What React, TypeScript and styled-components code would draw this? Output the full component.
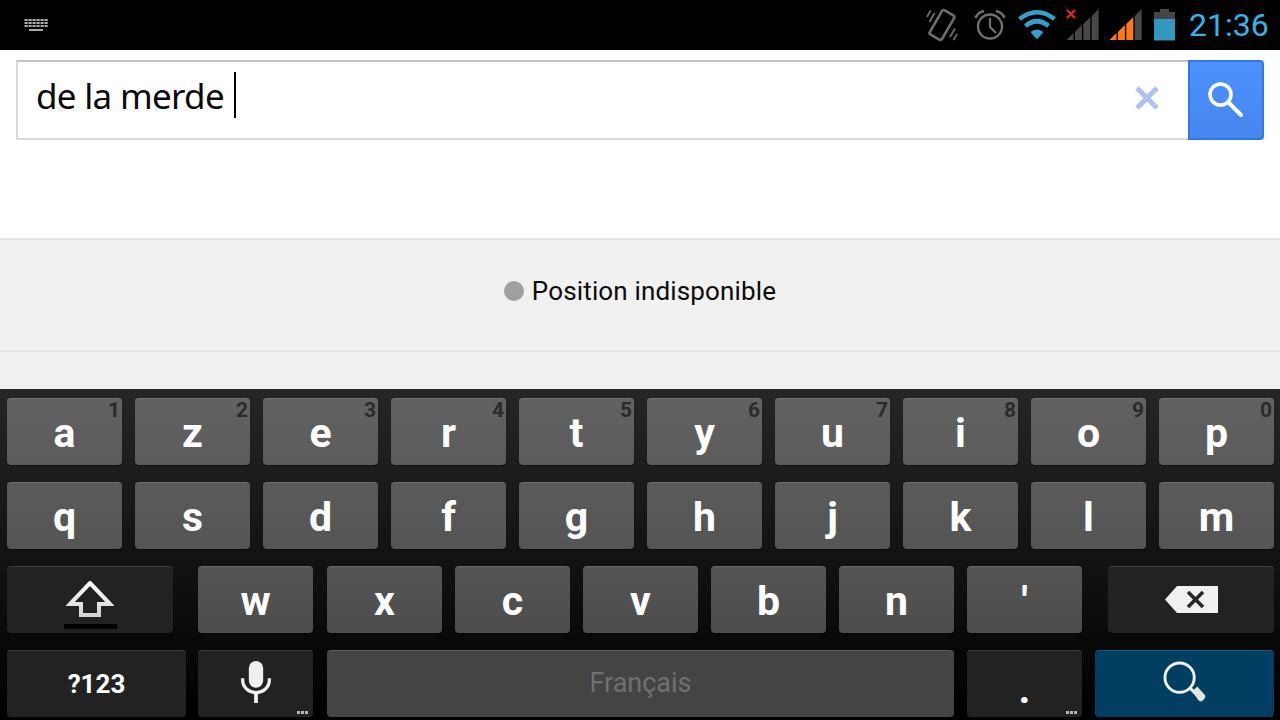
import React from 'react';
import styled, { createGlobalStyle } from 'styled-components';

const GlobalStyle = createGlobalStyle`
  html, body {
    margin: 0;
    padding: 0;
    width: 1280px;
    height: 720px;
    overflow: hidden;
    background: #fff;
    font-family: Roboto, "Liberation Sans", sans-serif;
  }
`;

const Screen = styled.div`
  width: 1280px;
  height: 720px;
  display: flex;
  flex-direction: column;
`;

const StatusBar = styled.header`
  height: 50px;
  flex: none;
  background: #000;
  display: flex;
  align-items: center;
  padding: 0 12px 0 24px;
  box-sizing: border-box;
`;

const StatusIcons = styled.div`
  margin-left: auto;
  display: flex;
  align-items: center;
`;

const StatusIcon = styled.svg<{ $gap: number }>`
  display: block;
  flex: none;
  margin-left: ${(p) => p.$gap}px;
`;

const KeyboardGlyph = styled.svg`
  display: block;
  margin-top: 2px;
`;

const Clock = styled.span`
  margin-left: 14px;
  width: 79px;
  font-size: 32px;
  font-weight: 400;
  line-height: 50px;
  color: #33b5e5;
  white-space: nowrap;
`;

const SearchArea = styled.section`
  height: 188px;
  flex: none;
  box-sizing: border-box;
  padding: 10px 16px 0;
  background: #fff;
`;

const SearchForm = styled.div`
  display: flex;
  height: 80px;
  width: 1248px;
`;

const SearchField = styled.div`
  flex: 1;
  display: flex;
  align-items: center;
  box-sizing: border-box;
  padding: 0 28px 0 18px;
  border: 2px solid #d9d9d9;
  border-top-color: #c4c4c4;
  border-right: none;
`;

const QueryText = styled.span`
  margin-top: -10px;
  font-family: "Noto Sans", "Open Sans", sans-serif;
  font-size: 35px;
  letter-spacing: -0.7px;
  color: #0a0a0a;
  white-space: nowrap;
`;

const Caret = styled.span`
  width: 2px;
  height: 46px;
  margin: -10px 0 0 10px;
  background: #000;
`;

const ClearIcon = styled.svg`
  margin: -4px 0 0 auto;
  display: block;
`;

const SearchButton = styled.div`
  width: 76px;
  flex: none;
  box-sizing: border-box;
  display: flex;
  align-items: center;
  justify-content: center;
  background: linear-gradient(#4d90fe, #4787ed);
  border: 2px solid #3079ed;
  border-radius: 0 4px 4px 0;
`;

const LocationBar = styled.section`
  height: 114px;
  flex: none;
  box-sizing: border-box;
  background: #f1f1f1;
  border-top: 2px solid #e5e5e5;
  border-bottom: 2px solid #e5e5e5;
  display: flex;
  align-items: center;
  justify-content: center;
  padding-bottom: 8px;
  gap: 8px;
`;

const Dot = styled.span`
  width: 20px;
  height: 20px;
  border-radius: 50%;
  background: #a0a0a0;
`;

const LocationText = styled.span`
  font-size: 26px;
  letter-spacing: 0.15px;
  color: #0c0c0c;
`;

const FooterGap = styled.div`
  flex: none;
  height: 37px;
  background: #f1f1f1;
`;

const Keyboard = styled.section`
  flex: 1;
  display: flex;
  flex-direction: column;
  gap: 17px;
  box-sizing: border-box;
  padding: 9px 6px 0 7px;
  background: linear-gradient(#262626, #000);
`;

const KeyRow = styled.div`
  display: flex;
  gap: 13px;
  height: 67px;
`;

type KeyKind = 'letter' | 'dark' | 'action' | 'space';

const keyBackgrounds: Record<KeyKind, string> = {
  letter: 'rgba(255, 255, 255, 0.28)',
  dark: '#222',
  action: '#003f62',
  space: '#444',
};

const Key = styled.div<{ $width?: number; $kind?: KeyKind; $before?: number }>`
  position: relative;
  flex: none;
  width: ${(p) => p.$width ?? 115}px;
  margin-left: ${(p) => p.$before ?? 0}px;
  box-sizing: border-box;
  padding-top: 3px;
  border-radius: 4px;
  display: flex;
  align-items: center;
  justify-content: center;
  color: #fff;
  background: ${(p) => keyBackgrounds[p.$kind ?? 'letter']};
  box-shadow: inset 0 1px 0 rgba(255, 255, 255, 0.12), 0 1px 1px rgba(0, 0, 0, 0.5);
  font-size: 41px;
  font-weight: 700;
  line-height: 1;
`;

const Hint = styled.span`
  position: absolute;
  top: 2px;
  right: 2px;
  font-size: 21px;
  font-weight: 700;
  color: #2b2b2b;
`;

const MoreDots = styled.span`
  position: absolute;
  right: 5px;
  bottom: 3px;
  width: 11px;
  height: 3px;
  background: repeating-linear-gradient(90deg, #b5b5b5 0 3px, transparent 3px 4px);
`;

const ModeLabel = styled.span`
  margin-top: -2px;
  font-size: 26px;
  font-weight: 700;
`;

const SpaceLabel = styled.span`
  margin-top: -4px;
  font-size: 27px;
  font-weight: 400;
  color: #707070;
`;

const PeriodLabel = styled.span`
  margin-top: 8px;
`;

const QuoteLabel = styled.span`
  margin-top: 0;
`;

const ShiftBar = styled.span`
  position: absolute;
  left: 57px;
  bottom: 4px;
  width: 53px;
  height: 5px;
  background: #000;
`;

const KeyGlyph = styled.svg<{ $lift: number }>`
  display: block;
  margin-top: -${(p) => p.$lift}px;
`;

function KeyboardIcon() {
  const rows = [0, 1, 2];
  return (
    <KeyboardGlyph width="25" height="14" viewBox="0 0 25 14" fill="#a8a8a8">
      {rows.map((r) =>
        [0, 1, 2, 3, 4, 5].map((c) => (
          <rect key={`${r}-${c}`} x={c * 4 + 0.5} y={r * 3} width="3.2" height="2" />
        ))
      )}
      <rect x="5" y="10" width="14" height="2" />
    </KeyboardGlyph>
  );
}

function VibrateIcon() {
  return (
    <StatusIcon $gap={0} width="32" height="36" viewBox="0 0 32 36" fill="none" stroke="#6e6e6e">
      <rect x="9" y="4" width="14" height="28" rx="2" strokeWidth="2.6" transform="rotate(30 16 18)" />
      <path d="M3.5 15 L8.5 6 M1 10 L4.5 3.5 M24 30 L29 21.5 M27.5 33 L31 27" strokeWidth="1.8" />
    </StatusIcon>
  );
}

function AlarmIcon() {
  return (
    <StatusIcon $gap={16} width="32" height="32" viewBox="0 0 32 32" fill="none" stroke="#707070">
      <circle cx="16" cy="17.5" r="12" strokeWidth="2.4" />
      <path d="M16 9 V18 L22 24" strokeWidth="2.2" />
      <path d="M1.5 9 Q4 3 10 2 M30.5 9 Q28 3 22 2" strokeWidth="2.4" />
    </StatusIcon>
  );
}

function WifiIcon() {
  return (
    <StatusIcon $gap={11} width="40" height="32" viewBox="0 0 40 32" fill="none" stroke="#33a0cc">
      <path d="M2.5 10 Q20 -3.5 37.5 10" strokeWidth="4.6" />
      <path d="M8.5 17 Q20 7.5 31.5 17" strokeWidth="4.6" />
      <path d="M13.5 23 Q20 18 26.5 23 L20 30.5 Z" fill="#33a0cc" stroke="none" />
    </StatusIcon>
  );
}

function SignalIcon({ gap, bars, cross }: { gap: number; bars: number; cross?: boolean }) {
  const heights = [7, 15, 23, 31];
  return (
    <StatusIcon $gap={gap} width="33" height="32" viewBox="0 0 33 32">
      {heights.map((h, i) => {
        const x = i * 8.4 + 0.5;
        return (
          <polygon
            key={h}
            points={`${x},31 ${x + 7},31 ${x + 7},${31 - h} ${x},${31 - h + 7}`}
            fill={i < bars ? '#ff7a14' : '#474747'}
          />
        );
      })}
      {cross && <path d="M1 1 L9 9 M9 1 L1 9" stroke="#e0232e" strokeWidth="2.4" />}
    </StatusIcon>
  );
}

function BatteryIcon() {
  return (
    <StatusIcon $gap={12} width="21" height="32" viewBox="0 0 21 32">
      <rect x="6" y="0" width="9" height="3" fill="#454545" />
      <rect x="0" y="3" width="21" height="7" fill="#454545" />
      <rect x="0" y="10" width="21" height="21.5" fill="#3396bd" />
    </StatusIcon>
  );
}

function ClearGlyph() {
  return (
    <ClearIcon width="26" height="26" viewBox="0 0 26 26">
      <path d="M3 3 L23 23 M23 3 L3 23" stroke="#aec2ef" strokeWidth="5" />
    </ClearIcon>
  );
}

function SearchGlyph() {
  return (
    <svg width="36" height="36" viewBox="0 0 36 36" fill="none" stroke="#fff">
      <circle cx="12.5" cy="12.5" r="10.5" strokeWidth="3.6" />
      <path d="M20.5 20.5 L33 33" strokeWidth="4" strokeLinecap="round" />
    </svg>
  );
}

function ShiftGlyph() {
  return (
    <KeyGlyph $lift={4} width="48" height="36" viewBox="0 0 48 36">
      <defs>
        <linearGradient id="shiftFill" x1="0" y1="0" x2="0" y2="1">
          <stop offset="0" stopColor="#ffffff" />
          <stop offset="1" stopColor="#d4d4d4" />
        </linearGradient>
      </defs>
      <path d="M24 3 L44 24 H33 V35 H15 V24 H4 Z" fill="none" stroke="url(#shiftFill)" strokeWidth="4" transform="translate(0 -1)" />
    </KeyGlyph>
  );
}

function MicGlyph() {
  return (
    <KeyGlyph $lift={7} width="32" height="42" viewBox="0 0 32 44" fill="none">
      <rect x="8.5" y="0" width="15" height="28" rx="7.5" fill="#f0f0f0" />
      <path d="M2 18 V20 C2 28 9 33 16 33 C23 33 30 28 30 20 V18" stroke="#f0f0f0" strokeWidth="3.4" />
      <path d="M16 33 V44" stroke="#f0f0f0" strokeWidth="4" />
    </KeyGlyph>
  );
}

function BackspaceGlyph() {
  return (
    <KeyGlyph $lift={3} width="53" height="27" viewBox="0 0 53 27">
      <path d="M12 0 H53 V27 H12 L0 13.5 Z" fill="#f0f0f0" />
      <path d="M23 6 L38 21 M38 6 L23 21" stroke="#262626" strokeWidth="3.6" />
    </KeyGlyph>
  );
}

function GoGlyph() {
  return (
    <KeyGlyph $lift={5} width="45" height="45" viewBox="0 0 46 46" fill="none">
      <circle cx="18" cy="18" r="15" stroke="#f0f0f0" strokeWidth="3" />
      <path d="M29 29 L41 41" stroke="#f0f0f0" strokeWidth="3" />
      <path d="M31 32 L36 27 L44 36 Q45 38 43 40 L41 42 Q39 43 37 41 Z" fill="#e4e4e4" />
    </KeyGlyph>
  );
}

const topRow = [
  ['a', '1'],
  ['z', '2'],
  ['e', '3'],
  ['r', '4'],
  ['t', '5'],
  ['y', '6'],
  ['u', '7'],
  ['i', '8'],
  ['o', '9'],
  ['p', '0'],
];
const homeRow = ['q', 's', 'd', 'f', 'g', 'h', 'j', 'k', 'l', 'm'];
const bottomLetters = ['c', 'v', 'b', 'n'];

export default function App() {
  return (
    <Screen>
      <GlobalStyle />
      <StatusBar>
        <KeyboardIcon />
        <StatusIcons>
          <VibrateIcon />
          <AlarmIcon />
          <WifiIcon />
          <SignalIcon gap={9} bars={0} cross />
          <SignalIcon gap={10} bars={3} />
          <BatteryIcon />
          <Clock>21:36</Clock>
        </StatusIcons>
      </StatusBar>

      <SearchArea>
        <SearchForm>
          <SearchField>
            <QueryText>de la merde</QueryText>
            <Caret />
            <ClearGlyph />
          </SearchField>
          <SearchButton>
            <SearchGlyph />
          </SearchButton>
        </SearchForm>
      </SearchArea>

      <LocationBar>
        <Dot />
        <LocationText>Position indisponible</LocationText>
      </LocationBar>
      <FooterGap />

      <Keyboard>
        <KeyRow>
          {topRow.map(([letter, hint]) => (
            <Key key={letter}>
              {letter}
              <Hint>{hint}</Hint>
            </Key>
          ))}
        </KeyRow>
        <KeyRow>
          {homeRow.map((letter) => (
            <Key key={letter}>{letter}</Key>
          ))}
        </KeyRow>
        <KeyRow>
          <Key $width={166} $kind="dark">
            <ShiftGlyph />
            <ShiftBar />
          </Key>
          <Key $before={12}>w</Key>
          <Key $before={1}>x</Key>
          {bottomLetters.map((letter) => (
            <Key key={letter}>{letter}</Key>
          ))}
          <Key>
            <QuoteLabel>'</QuoteLabel>
          </Key>
          <Key $width={166} $kind="dark" $before={13}>
            <BackspaceGlyph />
          </Key>
        </KeyRow>
        <KeyRow>
          <Key $width={179} $kind="dark">
            <ModeLabel>?123</ModeLabel>
          </Key>
          <Key $before={-1} $kind="dark">
            <MicGlyph />
            <MoreDots />
          </Key>
          <Key $width={627} $kind="space" $before={1}>
            <SpaceLabel>Français</SpaceLabel>
          </Key>
          <Key $kind="dark">
            <PeriodLabel>.</PeriodLabel>
            <MoreDots />
          </Key>
          <Key $width={179} $kind="action">
            <GoGlyph />
          </Key>
        </KeyRow>
      </Keyboard>
    </Screen>
  );
}
